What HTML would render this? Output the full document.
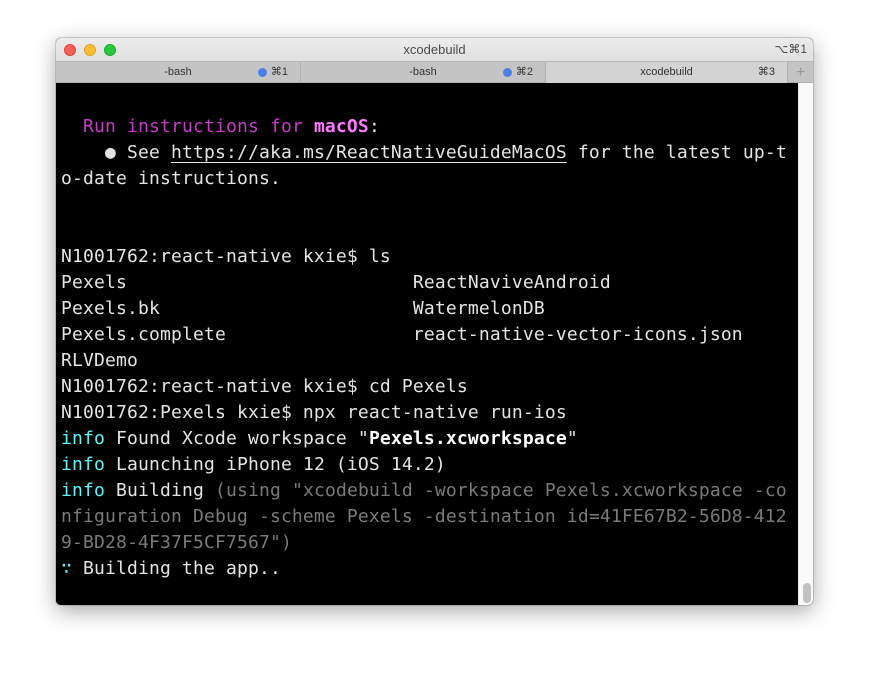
<!DOCTYPE html>
<html><head><meta charset="utf-8"><style>
html,body{margin:0;padding:0;width:869px;height:679px;background:#fff;overflow:hidden}
.win{position:absolute;left:56px;top:38px;width:757px;height:567px;border-radius:5px;overflow:hidden;box-shadow:0 6px 22px rgba(0,0,0,.35),0 0 0 1px rgba(0,0,0,.15);background:#000}
.title{position:absolute;left:0;top:0;width:757px;height:23px;background:linear-gradient(#ececec,#e0e0e0);font:13px "Liberation Sans",sans-serif;color:#4a4a4a;text-align:center;line-height:23px}
.dot{position:absolute;top:6px;width:12px;height:12px;border-radius:50%}
.tabs{position:absolute;left:0;top:23px;width:757px;height:22px;background:#c4c4c4;border-top:1px solid #b8b8b8;border-bottom:1px solid #b0b0b0;box-sizing:border-box;font:11px "Liberation Sans",sans-serif;color:#333}
.tab{position:absolute;top:0;height:21px;line-height:21px;text-align:center;border-right:1px solid #b0b0b0;box-sizing:border-box}
.tab .k{position:absolute;right:12px;top:0}
.tab .b{position:absolute;top:6px;width:9px;height:9px;border-radius:50%;background:#4a7fe8}
.term{position:absolute;left:0;top:45px;width:742px;height:522px;background:#000}
.sb{position:absolute;left:742px;top:45px;width:15px;height:522px;background:#fafafa;border-left:1px solid #e6e6e6;box-sizing:border-box}
.thumb{position:absolute;left:4px;top:500px;width:8px;height:20px;border-radius:4px;background:#c2c2c2}
pre{position:absolute;left:5px;top:5px;margin:0;font-family:"DejaVu Sans Mono","Liberation Mono",monospace;font-size:18px;letter-spacing:0.16px;line-height:26px;color:#e4e4e4}
.m{color:#c83ac8}.mb{color:#ff7aff;font-weight:bold}.c{color:#5ff7f7}.g{color:#7a7a7a}.w{color:#fff;font-weight:bold}
u{text-decoration:underline;text-underline-offset:4px}
</style></head><body>
<div class="win">
 <div class="title">xcodebuild
  <div class="dot" style="left:8px;background:#fd5f57;border:0.5px solid #e0443e;box-sizing:border-box"></div>
  <div class="dot" style="left:28px;background:#febc2e;border:0.5px solid #dea123;box-sizing:border-box"></div>
  <div class="dot" style="left:48px;background:#28c840;border:0.5px solid #1aab29;box-sizing:border-box"></div>
  <span style="position:absolute;right:6px;top:0;font-size:12px">⌥⌘1</span>
 </div>
 <div class="tabs">
  <div class="tab" style="left:0;width:245px">-bash<span class="b" style="left:202px"></span><span class="k">⌘1</span></div>
  <div class="tab" style="left:245px;width:245px">-bash<span class="b" style="left:202px"></span><span class="k">⌘2</span></div>
  <div class="tab" style="left:490px;width:242px;background:#d3d3d3">xcodebuild<span class="k">⌘3</span></div>
  <div class="tab" style="left:732px;width:25px;color:#999;font-size:16px;border:0">+</div>
 </div>
 <div class="term"><pre>&#32;
  <span class="m">Run instructions for </span><span class="mb">macOS</span>:
    ● See <u>https://aka.ms/ReactNativeGuideMacOS</u> for the latest up-t
o-date instructions.


N1001762:react-native kxie$ ls
Pexels                          ReactNaviveAndroid
Pexels.bk                       WatermelonDB
Pexels.complete                 react-native-vector-icons.json
RLVDemo
N1001762:react-native kxie$ cd Pexels
N1001762:Pexels kxie$ npx react-native run-ios
<span class="c">info</span> Found Xcode workspace "<span class="w">Pexels.xcworkspace</span>"
<span class="c">info</span> Launching iPhone 12 (iOS 14.2)
<span class="c">info</span> Building <span class="g">(using "xcodebuild -workspace Pexels.xcworkspace -co
nfiguration Debug -scheme Pexels -destination id=41FE67B2-56D8-412
9-BD28-4F37F5CF7567")</span>
<span class="c">∵</span> Building the app..</pre></div>
 <div class="sb"><div class="thumb"></div></div>
</div>
</body></html>
